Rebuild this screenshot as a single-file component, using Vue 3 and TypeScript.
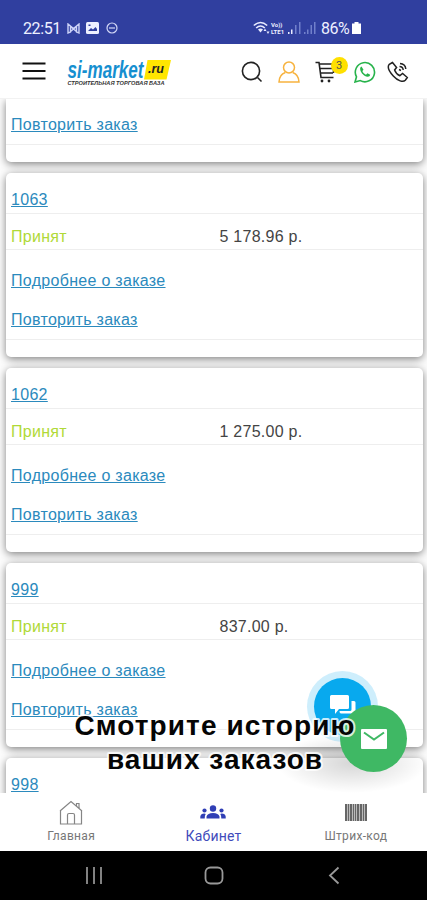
<script setup lang="ts">
interface Order {
  id: string
  total: string
}

const orders: Order[] = [
  { id: '1063', total: '5 178.96 р.' },
  { id: '1062', total: '1 275.00 р.' },
  { id: '999', total: '837.00 р.' },
]

const bars = [0, 3, 5, 8, 10, 12, 15, 18, 20]
const barWidths = [2, 1, 2, 1, 1, 2, 2, 1, 2]
</script>

<template>
  <div class="screen">
    <div class="status">
      <span class="time">22:51</span>
      <svg width="13" height="11" viewBox="0 0 13 11" fill="none" stroke="#cdd3f8" stroke-width="1.4">
        <path d="M1 1v9l2.500-1V3.500L6.500 6l3-2.500V9l2.500 1V1L6.500 5.500zM3 9l3.500-3L10 9" />
      </svg>
      <svg class="s-pic" width="13" height="12" viewBox="0 0 13 12">
        <rect width="13" height="12" rx="1.500" fill="#eef0ff" />
        <path d="M2 9l3-3 2 1.500L9.500 5 11 7v2z" fill="#303f9f" /><rect x="2.500" y="2.500" width="2" height="1.500" fill="#303f9f" />
      </svg>
      <svg class="s-dnd" width="12" height="12" viewBox="0 0 12 12" fill="none" stroke="#d3d8f7" stroke-width="1.200">
        <circle cx="6" cy="6" r="5" /><path d="M3 6h6" />
      </svg>
      <svg class="wifi" width="17" height="14" viewBox="0 0 17 14">
        <g fill="none" stroke="#e8ebff" stroke-width="1.600">
          <path d="M.8 4.500Q7.500-1.500 14.200 4.500M3.200 7Q7.500 3 11.800 7" />
        </g>
        <path d="M5 8.500q2.500-2 5 0L7.500 11.500zM10.500 10l1.500-2.500 1.500 2.500zM13.500 10.500h3L15 13z" fill="#e8ebff" />
      </svg>
      <div class="volte">
        <span>Vo))</span>
        <span>LTE1</span>
      </div>
      <svg class="bars" width="29" height="14" viewBox="0 0 29 14">
        <path d="M0 11h1.500v2H0zM3 8.500h1.500V13H3z" fill="#e8ebff" />
        <path d="M7 4h1.500v9H7zM11 1h1.500v12H11zM16 11h1.500v2H16zM19 8.500h1.500V13H19zM22.500 4H24v9h-1.500zM26 1h1.500v12H26z" fill="#7180cb" />
      </svg>
      <span class="percent">86%</span>
      <svg width="9" height="12" viewBox="0 0 9 13" preserveAspectRatio="none"><path d="M2.500 0h4v1.500H9V13H0V1.500h2.500z" fill="#fff" /></svg>
    </div>

    <header class="header">
      <svg width="24" height="18" viewBox="0 0 24 18" stroke="#111" stroke-width="2"><path d="M.5 1.500h23M.5 9h23M.5 16.500h23" /></svg>
      <svg class="logo" width="105" height="30" viewBox="0 0 105 30">
        <path d="M80.500 2H104l-4.500 19.500H77z" fill="#ffe600" />
        <text x="0.500" y="20" class="logo-name" textLength="76" lengthAdjust="spacingAndGlyphs">si-market</text>
        <text x="81" y="14.500" class="logo-ru" textLength="16" lengthAdjust="spacingAndGlyphs">.ru</text>
        <text x="0.500" y="27" class="logo-sub" textLength="97" lengthAdjust="spacingAndGlyphs">СТРОИТЕЛЬНАЯ ТОРГОВАЯ БАЗА</text>
      </svg>
      <div class="tools">
        <svg width="22" height="22" viewBox="0 0 22 22" fill="none" stroke="#222" stroke-width="1.600"><circle cx="10" cy="10" r="8.600" /><path d="M16.500 16.500l4 4" /></svg>
        <svg width="22" height="22" viewBox="0 0 22 22" fill="none" stroke="#f7b33f" stroke-width="1.500"><circle cx="11" cy="6.500" r="5.500" /><path d="M7.300 11.500C3 13 1.200 16 1 21h20c-.2-5-2-8-6.300-9.500" /></svg>
        <div class="cart">
          <svg width="22" height="22" viewBox="0 0 22 22" fill="none" stroke="#222" stroke-width="1.600"><path d="M.5 1.500H4L6 16.500h12.500M4.300 3H20M5.300 12H18M18.500 3v9M4.800 7.500H18" /><circle cx="7" cy="20" r="1.400" fill="#222" stroke="none" /><circle cx="14" cy="20" r="1.400" fill="#222" stroke="none" /></svg>
          <span class="badge">3</span>
        </div>
        <svg width="22" height="22" viewBox="0 0 22 22"><path d="M1 21l1.500-5.200A9.600 9.600 0 1 1 6.300 19.600z" fill="none" stroke="#27b34b" stroke-width="1.600" /><path d="M7.500 5.500c-1.200.6-1.600 1.900-1.200 3.500.8 3.200 3.700 6.200 7.200 6.700 1.500.1 2.500-.7 2.700-2l-2.800-1.500-1.400 1.500c-1.600-.6-3-2-3.600-3.600l1.100-1.400z" fill="#27b34b" /></svg>
        <svg width="22" height="22" viewBox="0 0 22 22" fill="none" stroke="#222" stroke-width="1.500"><path d="M5.500 1.500L2.300 3.300C.3 5.500 1.800 10 6.300 15s9.800 6.500 12 4.300l2-2.800-4.700-4-2.700 2.200c-2-.8-4.500-3.400-5.300-5.700l2-2.500zM12.500 5.500c2 0 3.500 1.500 3.700 3.500M13 2.500c3.200.2 5.500 2.500 5.800 5.500M12 8.500l2 1" /></svg>
      </div>
    </header>

    <main class="content">
      <div class="list">
        <article class="card card-first">
          <div class="row actions actions-short">
            <a class="link">Повторить заказ</a>
          </div>
        </article>
        <article v-for="order in orders" :key="order.id" class="card">
          <div class="row number"><a class="link">{{ order.id }}</a></div>
          <div class="row state"><span class="accepted">Принят</span><span class="total">{{ order.total }}</span></div>
          <div class="row actions">
            <a class="link">Подробнее о заказе</a>
            <a class="link">Повторить заказ</a>
          </div>
        </article>
        <article class="card">
          <div class="row number"><a class="link">998</a></div>
        </article>
      </div>
      <div class="shade"></div>
    </main>

    <nav class="nav">
      <div class="tab">
        <svg width="26" height="26" viewBox="0 0 26 26" fill="none" stroke="#858585" stroke-width="1.200"><path d="M2 11L13 1.500 24 11M2.500 10.500V24h21V10.500M9.500 24v-9q0-1.500 1.500-1.500h4q1.500 0 1.500 1.500v9M18.500 6V3.500H21V8" /></svg>
        <span class="tab-a">Главная</span>
      </div>
      <div class="tab active">
        <svg width="26" height="26" viewBox="0 0 26 26" fill="#303fb5"><circle cx="13" cy="8.500" r="3.200" /><circle cx="4.500" cy="10.500" r="2.100" /><circle cx="21.500" cy="10.500" r="2.100" /><path d="M6.500 18.500v-2q1-3.500 6.500-3.500t6.500 3.500v2zM.3 18.500v-2q.5-2.700 4-2.900L5.700 14q-1 1-1 4.500zM25.700 18.500v-2q-.5-2.700-4-2.900L20.300 14q1 1 1 4.500z" /></svg>
        <span class="tab-b">Кабинет</span>
      </div>
      <div class="tab">
        <svg width="22" height="26" viewBox="0 0 22 26" fill="#666"><rect y="4" width="22" height="17" fill="#bbb" /><rect v-for="(x, i) in bars" :key="x" :x="x" y="4" :width="barWidths[i]" height="17" /></svg>
        <span class="tab-c">Штрих-код</span>
      </div>
    </nav>

    <div class="system">
      <svg width="18" height="20" viewBox="0 0 18 20" stroke="#999" stroke-width="1.700"><path d="M2 1v17M9 1v17M16 1v17" /></svg>
      <svg width="20" height="20" viewBox="0 0 20 20" fill="none" stroke="#999" stroke-width="1.800"><rect x="1.500" y="1.500" width="17" height="16" rx="5" /></svg>
      <svg width="12" height="20" viewBox="0 0 12 20" fill="none" stroke="#999" stroke-width="1.800"><path d="M10.500 1.500L2 9.500l8.500 8" /></svg>
    </div>

    <div class="chat">
      <svg width="26" height="24" viewBox="0 0 26 24" fill="#fff"><path d="M1.500 0h16Q19 0 19 1.500v11q0 1.500-1.500 1.500H9l-4 5v-5H1.500Q0 14 0 12.500v-11Q0 0 1.500 0zM21.500 6H24q1.500 0 1.500 1.500V22l-4-3.500H11Q9.500 18.500 9.500 16H20q1.500 0 1.500-1.500z" /></svg>
    </div>
    <div class="mail">
      <svg width="26" height="20" viewBox="0 0 26 20"><rect width="26" height="20" rx="1" fill="#fff" /><path d="M3 3.500l10 7 10-7" fill="none" stroke="#3fb864" stroke-width="2" /></svg>
    </div>
    <svg class="caption" width="300" height="76" viewBox="0 0 300 76">
      <text x="9.500" y="32" textLength="280" class="cap-text">Смотрите историю</text>
      <text x="42" y="66" textLength="215" class="cap-text">ваших заказов</text>
    </svg>
  </div>
</template>

<style>
body {
  margin: 0;
  background: #fff;
}
</style>

<style scoped>
.screen {
  position: relative;
  width: 427px;
  height: 900px;
  overflow: hidden;
  display: flex;
  flex-direction: column;
  font-family: Roboto, "Liberation Sans", sans-serif;
}
.screen svg {
  display: block;
  flex: none;
}
.status {
  height: 44px;
  flex: none;
  box-sizing: border-box;
  padding: 12px 66px 0 23px;
  background: #303f9f;
  display: flex;
  align-items: center;
  color: #eef0ff;
  font-size: 16px;
}
.time {
  width: 44px;
  white-space: nowrap;
  letter-spacing: -0.4px;
}
.s-pic {
  margin-left: 6px;
}
.s-dnd {
  margin-left: 7px;
}
.wifi {
  margin-left: auto;
}
.volte {
  display: flex;
  flex-direction: column;
  width: 16px;
  margin-left: 1px;
  font-size: 6px;
  line-height: 7px;
  font-weight: 700;
  white-space: nowrap;
}
.bars {
  margin-left: 1px;
}
.percent {
  margin-left: 4px;
  width: 31px;
  letter-spacing: -0.5px;
}
.header {
  height: 55px;
  flex: none;
  box-sizing: border-box;
  padding: 0 18px 0 22px;
  background: #fff;
  display: flex;
  align-items: center;
  border-bottom: 1px solid #f2f2f2;
}
.logo {
  margin-left: 20.5px;
  margin-top: 4px;
}
.logo-name {
  font: italic 700 24px "Liberation Sans", sans-serif;
  fill: #168fd0;
}
.logo-ru {
  font: italic 700 12px "Liberation Sans", sans-serif;
  fill: #222;
}
.logo-sub {
  font: italic 700 5px "Liberation Sans", sans-serif;
  fill: #333;
}
.tools {
  margin-left: auto;
  margin-top: 2px;
  display: grid;
  grid-template-columns: 37px 37px 39px 33.5px 22px;
}
.cart {
  position: relative;
}
.badge {
  position: absolute;
  left: 16px;
  top: -4px;
  width: 17px;
  height: 17px;
  border-radius: 50%;
  background: #ffe000;
  color: #555;
  font-size: 11px;
  line-height: 17px;
  text-align: center;
}
.content {
  position: relative;
  height: 694px;
  flex: none;
  overflow: hidden;
  background: #fdfdfd;
  font-family: "Liberation Sans", sans-serif;
  font-size: 16px;
}
.list {
  padding: 0 4px 0 5.5px;
  display: flex;
  flex-direction: column;
  gap: 11px;
}
.card {
  height: 184px;
  flex: none;
  border-radius: 5px;
  background: #fff;
  box-shadow: 0 2px 8px rgba(0, 0, 0, 0.5);
}
.card-first {
  height: 63px;
  border-radius: 0 0 5px 5px;
}
.row {
  box-sizing: border-box;
  padding: 0 5.5px;
  display: flex;
  border-bottom: 1px solid #eee;
}
.number {
  height: 40.5px;
  padding-top: 18.3px;
}
.state {
  height: 36px;
  align-items: flex-end;
  padding-bottom: 3px;
}
.accepted {
  width: 208.5px;
  color: #b0d938;
  letter-spacing: 0.3px;
}
.total {
  color: #444;
  letter-spacing: 0.25px;
}
.actions {
  height: 90px;
  flex-direction: column;
  align-items: flex-start;
  gap: 21px;
  padding-top: 22px;
}
.actions-short {
  height: 46px;
  padding-top: 17px;
}
.link {
  color: #2b8abd;
  line-height: 18px;
  letter-spacing: 0.3px;
  text-decoration: underline;
}
.shade {
  position: absolute;
  right: 0;
  bottom: 0;
  width: 150px;
  height: 60px;
  background: radial-gradient(closest-side, rgba(0, 0, 0, 0.16), rgba(0, 0, 0, 0));
}
.nav {
  height: 58px;
  flex: none;
  background: #fff;
  display: grid;
  grid-template-columns: repeat(3, 1fr);
  box-sizing: border-box;
  padding-top: 7px;
}
.tab {
  display: flex;
  flex-direction: column;
  align-items: center;
  gap: 2px;
  color: #777;
  font-size: 12px;
  line-height: 16px;
}
.tab-a {
  letter-spacing: 0.3px;
}
.tab-b {
  font-size: 14px;
  letter-spacing: 0.2px;
}
.tab-c {
  letter-spacing: 0.3px;
}
.active {
  color: #3f4bbb;
}
.system {
  height: 49px;
  flex: none;
  box-sizing: border-box;
  padding: 0 87px 0 85px;
  background: #000;
  display: flex;
  justify-content: space-between;
  align-items: center;
}
.system svg:nth-child(2) {
  margin-right: 4px;
}
.chat {
  position: absolute;
  left: 314px;
  top: 678px;
  width: 57px;
  height: 57px;
  border-radius: 50%;
  background: #08a9ee;
  box-shadow: 0 0 0 7px rgba(8, 169, 238, 0.2);
  display: flex;
  align-items: center;
  justify-content: center;
}
.caption {
  position: absolute;
  left: 65px;
  top: 703px;
}
.cap-text {
  font: 700 28px "Liberation Sans", sans-serif;
  fill: #050505;
  stroke: rgba(255, 255, 255, 0.8);
  stroke-width: 4px;
  stroke-linejoin: round;
  paint-order: stroke;
}
.mail {
  position: absolute;
  left: 340px;
  top: 705px;
  width: 67px;
  height: 67px;
  border-radius: 50%;
  background: #3fb864;
  display: flex;
  align-items: center;
  justify-content: center;
}
</style>
